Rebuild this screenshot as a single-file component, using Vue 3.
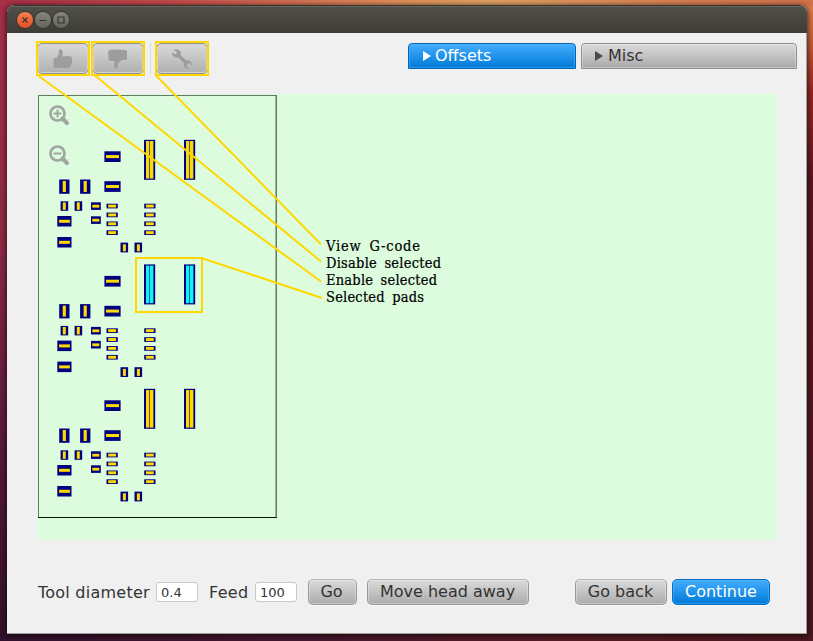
<script setup>
const groups = [
  { dy: 0, fill: '#f4d80c' },
  { dy: 124.6, fill: '#10f4ee' },
  { dy: 249, fill: '#ffd800' }
]
// outer x, y, w, h and inner x, y, w, h
const pads = [
  [104.4, 151.3, 16.2, 10.7, 106, 155.1, 13, 3],
  [104.4, 181.2, 16.2, 10.7, 106, 185, 13, 3],
  [59.2, 179.5, 10.3, 14.3, 62.7, 181, 3.2, 11],
  [80.1, 179.5, 10.3, 14.3, 83.6, 181, 3.2, 11],
  [60.6, 201.3, 7.6, 9.5, 62.8, 202.4, 3, 7.4],
  [74.6, 201.3, 7.6, 9.5, 76.8, 202.4, 3, 7.4],
  [91, 202.3, 9.8, 7.6, 92.3, 204.8, 7, 2.8],
  [91, 216.3, 9.8, 7.6, 92.3, 218.8, 7, 2.8],
  [57.3, 216, 14.2, 10.5, 59.1, 219.8, 10.8, 3],
  [57.3, 237, 14.2, 10.5, 59.1, 240.8, 10.8, 3],
  [120.5, 242.6, 7.6, 9.8, 122.9, 244.3, 3, 7],
  [134.5, 242.6, 7.6, 9.8, 136.9, 244.3, 3, 7]
]
for (const x of [106.5, 144.2]) {
  for (let i = 0; i < 4; i++) {
    const y = 203.7 + i * 8.87
    pads.push([x, y, 11.3, 4.7, x + 1.7, y + 0.9, 7.9, 2.9])
  }
}
const notes = [
  { text: 'View G-code', y: 251, w: 94 },
  { text: 'Disable selected', y: 268, w: 115 },
  { text: 'Enable selected', y: 285, w: 111 },
  { text: 'Selected pads', y: 302, w: 98 }
]
</script>

<template>
  <div class="desktop">
    <div class="window">
      <header class="titlebar">
        <span class="ctl close"><svg viewBox="0 0 16 16"><path d="M5.5 5.5l5 5m0-5l-5 5" /></svg></span>
        <span class="ctl"><svg viewBox="0 0 16 16"><path d="M4.5 8.5h7" /></svg></span>
        <span class="ctl"><svg viewBox="0 0 16 16"><path d="M5 5h6v6H5z" /></svg></span>
      </header>
      <main class="content">
        <div class="top">
          <div class="tools">
            <button class="tool">
              <svg viewBox="0 0 20 20"><path d="M0.5 10.5Q0 9.2 1.5 9H3.5Q6 6 6 3.5L5.8 1.5Q6 0 7.6 .2Q10 .7 9.8 4L9.2 7.5Q14 6.5 18 7.5Q19.4 8 18.8 10Q19.5 11.5 18.8 13Q19.2 14.6 18.2 15.5Q18.4 17.5 16.8 18.2Q12 19.3 6.5 19L1.5 18.8Q.5 18.5 .7 17Z" /></svg>
            </button>
            <button class="tool second">
              <svg viewBox="0 0 20 20"><path d="M0.3 2.5Q.6 1 3 .8Q9 0 17 1Q19.5 1.2 19 2.7V9.5Q19 11 17.5 11H15Q11.5 11.5 10 14.5V18Q9.5 20 8 19.8Q6.2 19.5 6 17L6.5 11.8Q2.5 12.5 1.2 11.6Q0 11 .7 9Q-.3 7.8.4 6Q-.4 4.5.3 2.5Z" /></svg>
            </button>
            <i class="divider"></i>
            <button class="tool third">
              <svg viewBox="0 0 20 20"><path d="M1.2 .8Q5-.8 7.8 1.8Q9.2 3.3 8.8 6.2L14 11.3Q17.2 11 18.7 12.6Q20.5 14.5 19.5 16.3L17.2 14L14.8 15.7L15 18L17.2 19.7Q15 20.6 13.1 19Q11.3 17.4 11.7 14.1L6.5 8.7Q3.4 9.2 1.7 7.5Q-.5 5.7 .2 3.3L3.2 5.5L5.3 3.6Z" /></svg>
            </button>
          </div>
          <nav class="tabs">
            <div class="tab active"><svg viewBox="0 0 8 10"><path d="M0 0l8 5-8 5z" /></svg>Offsets</div>
            <div class="tab misc"><svg viewBox="0 0 8 10"><path d="M0 0l8 5-8 5z" /></svg>Misc</div>
          </nav>
        </div>
        <div class="canvas">
          <svg viewBox="37 94 740 446">
            <path d="M38.5 518V95.5H276" class="edge" />
            <path d="M276.2 95V518" class="edge right" />
            <path d="M38 517.5H276.7" class="edge bottom" />
            <g class="zoomicon">
              <circle cx="57.5" cy="113.5" r="7" /><path d="M62.5 118.5l4.5 4.5" class="handle" /><path d="M53.5 113.5h8m-4-4v8" class="sign" />
              <circle cx="57.5" cy="153.5" r="7" /><path d="M62.5 158.5l4.5 4.5" class="handle" /><path d="M53.5 153.5h8" class="sign" />
            </g>
            <g v-for="g in groups" :key="g.dy" :transform="`translate(0 ${g.dy})`">
              <g v-for="(p, i) in pads" :key="i">
                <rect :x="p[0]" :y="p[1]" :width="p[2]" :height="p[3]" fill="#000080" />
                <rect :x="p[4]" :y="p[5]" :width="p[6]" :height="p[7]" fill="#ffd800" />
              </g>
              <g v-for="x in [144, 184]" :key="x">
                <rect :x="x" y="139.8" width="11.2" height="40" fill="#000080" />
                <rect :x="x + 2" y="141" width="3.4" height="37.6" :fill="g.fill" />
                <rect :x="x + 6" y="141" width="3.4" height="37.6" :fill="g.fill" />
              </g>
            </g>
          </svg>
        </div>
        <footer class="bottom-bar">
          <label class="tooldia">Tool diameter</label>
          <div class="field">0.4</div>
          <label class="feed">Feed</label>
          <div class="field">100</div>
          <button class="btn go">Go</button>
          <button class="btn move">Move head away</button>
          <button class="btn back">Go back</button>
          <button class="btn primary">Continue</button>
        </footer>
      </main>
    </div>
    <svg class="annotations" viewBox="0 0 813 641">
      <g class="callout">
        <rect x="37" y="42" width="52" height="33" />
        <rect x="92" y="42" width="52" height="33" />
        <rect x="156" y="42" width="52" height="33" />
        <rect x="136" y="258" width="66" height="54" />
        <path d="M38 75.5L321 281.5M95 75.5L321 261.5M156 75.5L321 244.5M203 258.5L322 298" />
      </g>
      <text v-for="n in notes" :key="n.text" x="326" :y="n.y" :textLength="n.w">{{ n.text }}</text>
    </svg>
  </div>
</template>

<style>
body { overflow: hidden; }
</style>

<style scoped>
* { box-sizing: border-box; }
.desktop {
  position: relative;
  width: 813px;
  height: 641px;
  padding: 5px 6px 8px 7px;
  font-family: "DejaVu Sans", sans-serif;
  background:
    linear-gradient(90deg, #a62f47, #c54d4b 22%, #dd8b58 48%, #e0a065 60%, #d77d50 85%, #cf714b) top / 100% 6px no-repeat,
    linear-gradient(90deg, #32112b, #46172c 40%, #561a24 70%, #4c1720) bottom / 100% 9px no-repeat,
    linear-gradient(#a62f47, #8f2a45 35%, #56193a 70%, #30112a) left / 50% 100% no-repeat,
    linear-gradient(#d8804f, #c05a38 7%, #96281f 14%, #5a1720 28%, #4c1720) right / 50% 100% no-repeat;
}
.window {
  height: 629px;
  display: flex;
  flex-direction: column;
  border-radius: 7px 7px 0 0;
  background: #f0f0f0;
  box-shadow: 0 1px 5px 1px rgba(0, 0, 0, .6);
  overflow: hidden;
}
.titlebar {
  height: 28px;
  flex: none;
  display: flex;
  align-items: center;
  gap: 2px;
  padding: 0 0 0 10.4px;
  border-top: 1px solid #35342f;
  border-radius: 7px 7px 0 0;
  background: linear-gradient(#504f49, #3d3c37);
  box-shadow: inset 0 1px #65645d;
}
.ctl {
  width: 16px;
  height: 16px;
  border-radius: 50%;
  background: linear-gradient(#87867e, #64635c);
  box-shadow: 0 0 0 1px #35342f;
}
.ctl.close { background: linear-gradient(#f87f55, #df4f20); }
.ctl svg { display: block; fill: none; stroke: #35342f; stroke-width: 1.2; }
.content {
  flex: 1;
  display: flex;
  flex-direction: column;
  padding: 10px 9px 0 30px;
  border: solid #a19f9a;
  border-width: 0 1px 1px 0;
}
.top { display: flex; justify-content: space-between; height: 51px; }
.tools { display: flex; }
.tool {
  display: flex;
  align-items: center;
  justify-content: center;
  width: 52px;
  height: 31px;
  padding: 0;
  border: 1px solid #929292;
  border-radius: 5px;
  background: linear-gradient(#d9d9d9, #b0b0b0);
  box-shadow: inset 0 0 0 1px #d2d2d2;
}
.tool svg { width: 20px; height: 20px; fill: #9d9d9d; }
.tool.second { margin-left: 3px; }
.tool.third { margin-left: 5px; }
.divider { width: 1px; height: 31px; margin-left: 6px; background: #dcdcdc; }
.tabs { display: flex; gap: 5px; }
.tab {
  height: 26px;
  display: flex;
  align-items: center;
  gap: 4px;
  padding: 0 0 1px 14px;
  border: 1px solid #8f8f8f;
  border-radius: 4px 4px 0 0;
  background: linear-gradient(#dbdbdb, #a9a9a9);
  box-shadow: inset 0 0 0 1px rgba(255, 255, 255, .3);
  color: #333;
  font-size: 16px;
  width: 168px;
}
.tab svg { width: 8px; height: 10px; fill: currentColor; }
.tab.misc { width: 216px; padding-left: 13px; gap: 5px; }
.tab.active {
  border-color: #0064b5;
  background: linear-gradient(#44adff, #007ad6);
  box-shadow: inset 0 0 0 1px rgba(100, 190, 255, .4);
  color: #fff;
}
.tab.misc svg { fill: #4a4a4a; }
.canvas { width: 740px; height: 446px; background: #ddfcdd; }
.canvas svg { display: block; width: 740px; height: 446px; }
.edge { fill: none; stroke: #667866; stroke-width: 1; }
.edge.right { stroke: #526352; stroke-width: 1.3; }
.edge.bottom { stroke: #081008; }
.zoomicon { fill: none; stroke: #a2a6a2; stroke-width: 2.7; }
.zoomicon .handle { stroke-width: 4; stroke-linecap: round; }
.zoomicon .sign { stroke-width: 2; }
.bottom-bar {
  display: flex;
  align-items: center;
  margin-top: 39px;
  padding-left: 1px;
  height: 26px;
  font-size: 16px;
  color: #333;
  white-space: nowrap;
}
.tooldia { width: 118px; letter-spacing: .24px; }
.feed { width: 46px; margin-left: 11px; letter-spacing: .3px; }
.field {
  width: 42px;
  height: 20px;
  padding-left: 4px;
  border: 1px solid #c8c8c8;
  border-radius: 3px;
  background: #fff;
  font-size: 13px;
  line-height: 19px;
}
.btn {
  height: 26px;
  padding: 0 0 2px;
  border: 1px solid #999;
  border-top-color: #b5b5b5;
  border-radius: 5px;
  background: linear-gradient(#dbdbdb, #ababab);
  box-shadow: inset 0 0 0 1px rgba(255, 255, 255, .3), 0 1px #fafafa;
  font: 16px "DejaVu Sans", sans-serif;
  color: #333;
}
.btn.go { width: 49px; margin-left: 11px; padding-right: 2px; }
.btn.move { width: 162px; margin-left: 10px; padding-right: 1px; }
.btn.back { width: 92px; margin-left: 46px; padding-right: 1px; }
.btn.primary {
  width: 98px;
  margin-left: 5px;
  border-color: #0070c8;
  background: linear-gradient(#44adff, #007ad6);
  box-shadow: inset 0 0 0 1px rgba(100, 190, 255, .4), 0 1px #fafafa;
  color: #fff;
}
.annotations { position: absolute; left: 0; top: 0; width: 813px; height: 641px; pointer-events: none; }
.callout { fill: none; stroke: #ffd700; stroke-width: 2; }
.annotations text { font: 14.5px "DejaVu Serif Condensed", "DejaVu Serif", serif; font-stretch: condensed; word-spacing: 3px; fill: #000; stroke: #000; stroke-width: .2px; }
</style>
